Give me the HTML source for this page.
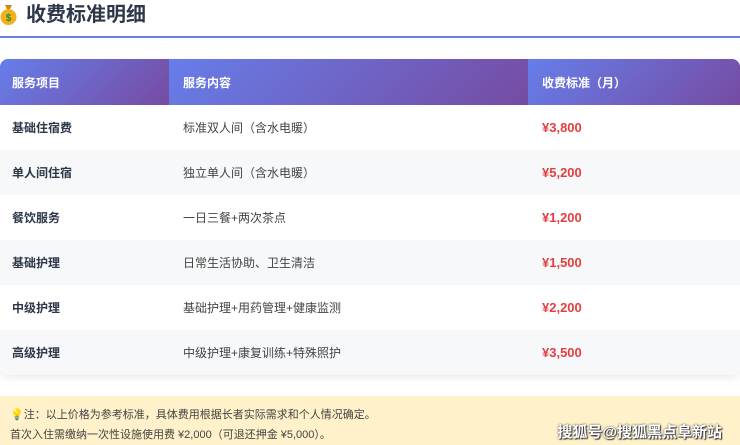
<!DOCTYPE html><html><head><meta charset="utf-8"><style>
body{margin:0;width:740px;height:445px;overflow:hidden;background:#fff;font-family:"Liberation Sans","Noto Sans CJK SC",sans-serif;position:relative}
.t{position:absolute;left:26px;top:1px;font-size:20px;font-weight:bold;color:#2d3748;line-height:28px}
.ic{position:absolute;left:0;top:3px;width:17px;height:22px}
.ln{position:absolute;left:0;top:36px;width:740px;height:2px;background:#6b7fe0}
.card{position:absolute;left:0;top:59px;width:740px;height:316px;border-radius:8px;box-shadow:0 3px 8px rgba(0,0,0,.08);overflow:hidden}
.h{display:flex;height:46px;color:#fff;font-size:12px;font-weight:bold}
.h div{display:flex;align-items:center;padding-left:12px;box-sizing:border-box}
.r{display:flex;height:45px;font-size:12px;color:#333;align-items:center}
.c1{width:169px;padding-left:12px;box-sizing:border-box;font-weight:bold;color:#2d3748}
.c2{width:359px;padding-left:14px;box-sizing:border-box;color:#444}
.c3{padding-left:14px;color:#e53e3e;font-weight:bold;font-size:13px}
.note{position:absolute;left:0;top:396px;width:740px;height:49px;background:#fff1c9;font-size:11px;color:#444}
.wm{position:absolute;right:18px;top:421px;color:#fff;font-size:15px;font-weight:bold;text-shadow:0 0 2px #333,1px 1px 1px #333}
</style></head><body>
<svg class="ic" viewBox="0 0 17 22"><path d="M5 2 L12 2 L10 6 L7 6Z" fill="#c98a10"/><ellipse cx="8.5" cy="14" rx="8" ry="8" fill="#f0b020"/><text x="8.5" y="18" font-size="10" text-anchor="middle" fill="#2a8a2a" font-weight="bold" font-family="Liberation Sans">$</text></svg>
<div class="t">收费标准明细</div>
<div class="ln"></div>
<div class="card">
<div class="h"><div style="width:169px;background:linear-gradient(135deg,#667eea,#764ba2)">服务项目</div><div style="width:359px;padding-left:14px;background:linear-gradient(135deg,#667eea,#764ba2)">服务内容</div><div style="flex:1;padding-left:14px;background:linear-gradient(135deg,#667eea,#764ba2)">收费标准（月）</div></div>
<div>
<div class="r" style="background:#fff"><div class="c1">基础住宿费</div><div class="c2">标准双人间（含水电暖）</div><div class="c3">¥3,800</div></div>
<div class="r" style="background:#f7f8fa"><div class="c1">单人间住宿</div><div class="c2">独立单人间（含水电暖）</div><div class="c3">¥5,200</div></div>
<div class="r" style="background:#fff"><div class="c1">餐饮服务</div><div class="c2">一日三餐+两次茶点</div><div class="c3">¥1,200</div></div>
<div class="r" style="background:#f7f8fa"><div class="c1">基础护理</div><div class="c2">日常生活协助、卫生清洁</div><div class="c3">¥1,500</div></div>
<div class="r" style="background:#fff"><div class="c1">中级护理</div><div class="c2">基础护理+用药管理+健康监测</div><div class="c3">¥2,200</div></div>
<div class="r" style="background:#f7f8fa"><div class="c1">高级护理</div><div class="c2">中级护理+康复训练+特殊照护</div><div class="c3">¥3,500</div></div>
</div></div>
<div class="note"><div style="position:absolute;left:10px;top:10px">💡注：以上价格为参考标准，具体费用根据长者实际需求和个人情况确定。</div><div style="position:absolute;left:10px;top:30px">首次入住需缴纳一次性设施使用费 ¥2,000（可退还押金 ¥5,000）。</div></div>
<div class="wm">搜狐号@搜狐黑点阜新站</div>
</body></html>
